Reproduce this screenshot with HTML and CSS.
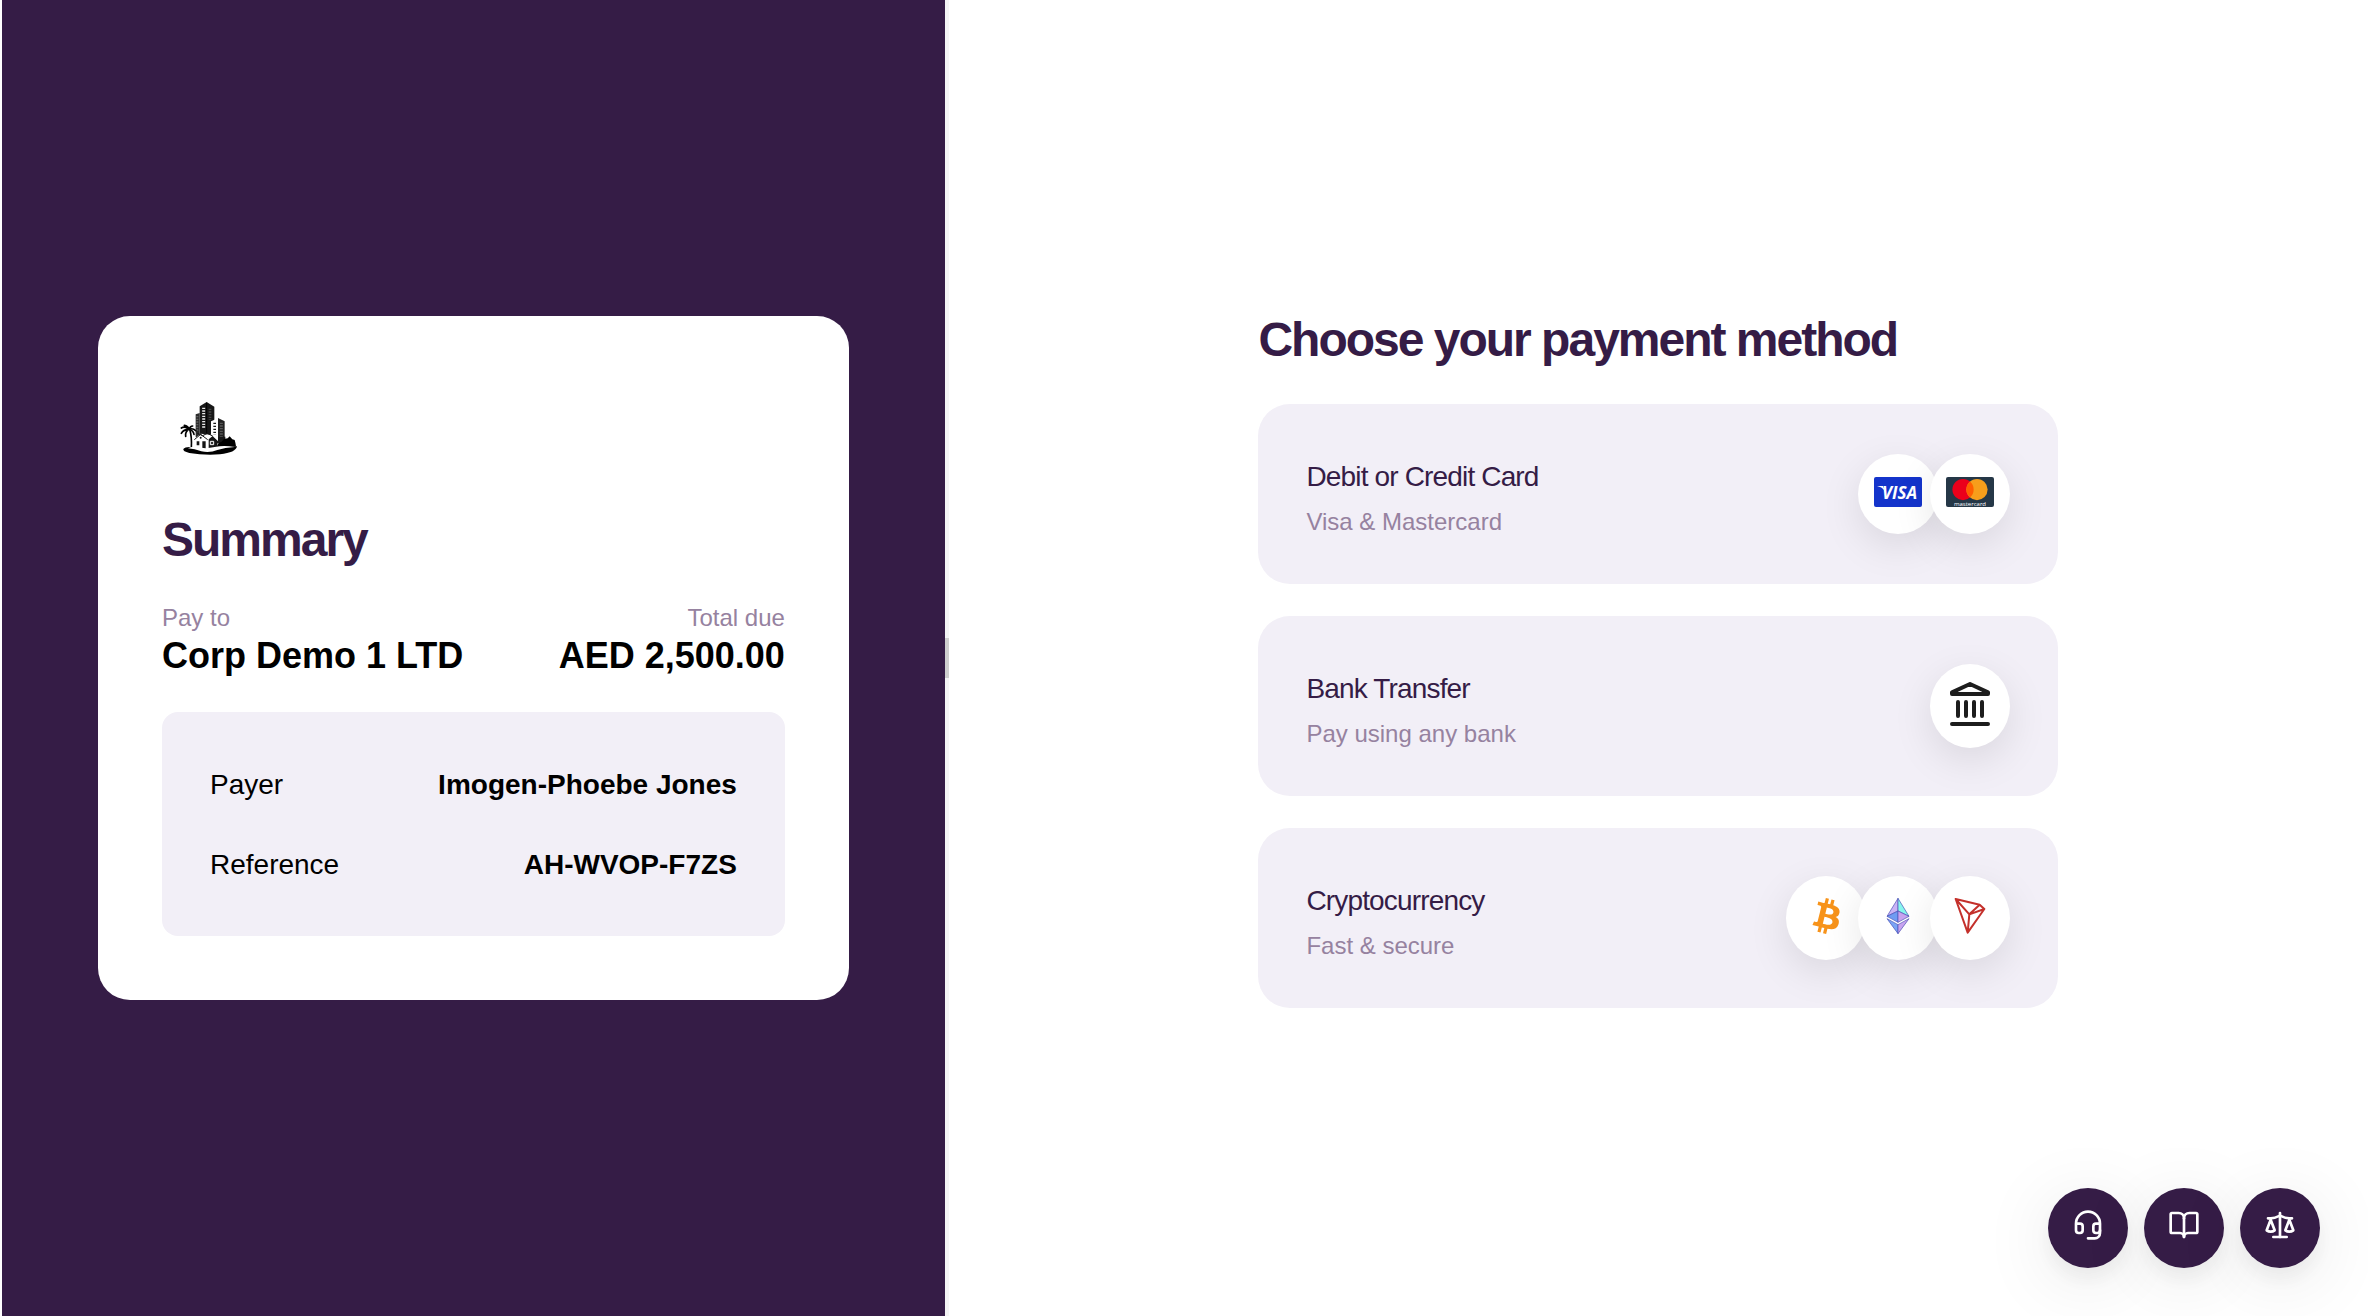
FILE: index.html
```html
<!DOCTYPE html>
<html lang="en">
<head>
<meta charset="utf-8">
<meta name="viewport" content="width=device-width, initial-scale=1">
<title>Checkout</title>
<link rel="stylesheet" href="styles.css">
</head>
<body>
<div class="checkout">
  <aside class="summary-pane">
    <section class="summary" aria-labelledby="summary-title">
      <svg class="merchant-logo" viewBox="6 0 288 288" role="img" aria-label="Corp Demo 1 LTD logo">
        <!-- towers -->
        <g fill="#171717">
          <path d="M107 103L119 99V168L107 172Z" fill="#2b2b2b"/>
          <path d="M119 79L140 66L163 80V126L156 128V164L119 170Z"/>
          <path d="M174 114L194 124V182L174 190Z" fill="#222"/>
          <path d="M150 170L196 170L196 190H150Z"/>
        </g>
        <path d="M140 68V165" stroke="#000" stroke-width="3"/>
        <path d="M153 124L174 115V184L153 166Z" fill="#fff"/>
        <g fill="none" stroke="#fff" stroke-dasharray="4 4">
          <path d="M131 83V146" stroke-width="9" opacity=".9"/>
          <path d="M112 108V155" stroke-width="6" opacity=".25"/>
          <path d="M150 86V120" stroke-width="8" opacity=".2"/>
          <path d="M184 128V170" stroke-width="9" opacity=".25"/>
        </g>
        <path d="M164 128V165" stroke="#1b1b1b" stroke-width="8" stroke-dasharray="4 5" fill="none"/>
        <!-- palm -->
        <g fill="none" stroke="#000" stroke-linecap="round">
          <path d="M89 148Q96 170 94 204" stroke-width="5"/>
          <path d="M88 148Q74 137 64 144M88 148Q70 148 64 160M88 148Q75 154 77 169M88 148Q90 138 98 138M88 148Q84 138 73 136M88 148Q98 143 107 152M88 148Q100 152 102 163" stroke-width="5"/>
        </g>
        <!-- house -->
        <path d="M104 176L122 161L160 165L168 172L148 180V210H104Z" fill="#fff"/>
        <path d="M103 179L122 163L143 179M112 160L128 167L142 160L158 168" fill="none" stroke="#151515" stroke-width="3"/>
        <g fill="#151515">
          <path d="M110 184H118V196H110ZM127 184H137V208H127ZM146 178L158 168L172 182V204H146Z"/>
          <circle cx="122" cy="173" r="3"/>
        </g>
        <path d="M151 184H161V194H151Z" fill="#333" stroke="#fff" stroke-width="3"/>
        <!-- island -->
        <path d="M170 204Q172 188 184 186L192 177L203 175L209 169L217 178L224 180Q227 190 228 199L200 204Z" fill="#000"/>
        <path d="M70 207Q76 198 104 202Q130 211 160 207Q190 197 231 199Q228 218 180 223Q130 226 88 219Q68 214 70 207Z" fill="#000"/>
        <path d="M84 205Q104 206 124 214Q150 219 172 210Q195 202 224 201Q192 195 164 201Q136 208 112 201Q92 198 84 205Z" fill="#fff"/>
      </svg>
      <h1 class="heading" id="summary-title">Summary</h1>
      <dl class="totals">
        <div class="total">
          <dt>Pay to</dt>
          <dd>Corp Demo 1 LTD</dd>
        </div>
        <div class="total total-end">
          <dt>Total due</dt>
          <dd>AED 2,500.00</dd>
        </div>
      </dl>
      <dl class="details">
        <div class="detail">
          <dt>Payer</dt>
          <dd>Imogen-Phoebe Jones</dd>
        </div>
        <div class="detail">
          <dt>Reference</dt>
          <dd>AH-WVOP-F7ZS</dd>
        </div>
      </dl>
    </section>
  </aside>

  <div class="splitter" role="separator" aria-orientation="vertical"><span class="splitter-grip"></span></div>

  <main class="methods-pane">
    <div class="methods">
      <h2 class="heading">Choose your payment method</h2>

      <button type="button" class="method">
        <span class="method-text">
          <span class="method-name">Debit or Credit Card</span>
          <span class="method-note">Visa &amp; Mastercard</span>
        </span>
        <span class="badges badges-cards">
          <span class="badge">
            <svg class="card-icon" viewBox="0 0 48 30" role="img" aria-label="Visa">
              <rect width="48" height="30" rx="2" fill="#1434cb"/>
              <path d="M3 9H9L12 17L10 13Q8 10 3 9Z" fill="#fff"/>
              <text x="8" y="22" class="visa-word">VISA</text>
            </svg>
          </span>
          <span class="badge">
            <svg class="card-icon" viewBox="0 0 48 30" role="img" aria-label="Mastercard">
              <rect width="48" height="30" rx="2" fill="#253747"/>
              <circle cx="17" cy="12.600" r="10.600" fill="#eb001b"/>
              <circle cx="31" cy="12.600" r="10.600" fill="#f79e1b"/>
              <path d="M24 4.600a10.600 10.600 0 0 1 0 16a10.600 10.600 0 0 1 0-16Z" fill="#ff5f00"/>
              <text x="24" y="29" text-anchor="middle" class="mc-word">mastercard</text>
            </svg>
          </span>
        </span>
      </button>

      <button type="button" class="method">
        <span class="method-text">
          <span class="method-name">Bank Transfer</span>
          <span class="method-note">Pay using any bank</span>
        </span>
        <span class="badges">
          <span class="badge">
            <svg class="bank-icon" viewBox="150 126 120 132" fill="none" stroke="#1d1d1d" stroke-width="12" stroke-linecap="round" stroke-linejoin="round" aria-hidden="true">
              <path d="M156 157L210 132L264 157V162H156Z"/>
              <path d="M174 186V228M198 186V228M222 186V228M246 186V228M156 252H264"/>
            </svg>
          </span>
        </span>
      </button>

      <button type="button" class="method">
        <span class="method-text">
          <span class="method-name">Cryptocurrency</span>
          <span class="method-note">Fast &amp; secure</span>
        </span>
        <span class="badges">
          <span class="badge">
            <svg class="coin-icon" viewBox="5.680 6 20 20" role="img" aria-label="Bitcoin">
              <path fill="#f7931a" d="M23.189 14.020c.314-2.096-1.283-3.223-3.465-3.975l.708-2.840-1.728-.430-.690 2.765c-.454-.114-.920-.220-1.385-.326l.695-2.783L15.596 6l-.708 2.839c-.376-.086-.746-.170-1.104-.260l.002-.009-2.384-.595-.460 1.846s1.283.294 1.256.312c.700.175.826.638.805 1.006l-.806 3.235c.048.012.110.030.180.057l-.183-.045-1.130 4.532c-.086.212-.303.531-.793.410.018.025-1.256-.313-1.256-.313l-.858 1.978 2.250.561c.418.105.828.215 1.231.318l-.715 2.872 1.727.430.708-2.840c.472.127.930.245 1.378.357l-.706 2.828 1.728.430.715-2.866c2.948.558 5.164.333 6.097-2.333.752-2.146-.037-3.385-1.588-4.192 1.130-.260 1.980-1.003 2.207-2.538zm-3.950 5.538c-.533 2.147-4.148.986-5.320.695l.950-3.805c1.172.293 4.929.872 4.370 3.110zm.535-5.569c-.487 1.953-3.495.960-4.470.717l.860-3.450c.975.243 4.118.696 3.610 2.733z"/>
            </svg>
          </span>
          <span class="badge">
            <svg class="coin-icon" viewBox="330 114 108 108" role="img" aria-label="Ethereum">
              <g stroke="#4a4fb5" stroke-width="2" stroke-linejoin="round">
                <path d="M384 115V153L351 169Z" fill="#c9b3f5"/>
                <path d="M384 115V153L417 169Z" fill="#88f7ee"/>
                <path d="M384 153V187L351 169Z" fill="#6f9cf2"/>
                <path d="M384 153V187L417 169Z" fill="#c9a4f0"/>
                <path d="M351 176L384 194V221Z" fill="#7aa5f5"/>
                <path d="M417 176L384 194V221Z" fill="#c9a4f0"/>
              </g>
            </svg>
          </span>
          <span class="badge">
            <svg class="coin-icon" viewBox="546 114 108 108" role="img" aria-label="TRON" fill="none" stroke="#c4302b" stroke-width="6" stroke-linejoin="round">
              <path d="M557 117L629 134L643 147L593 218ZL598 163L593 218M598 163L629 134M598 163L643 147"/>
            </svg>
          </span>
        </span>
      </button>
    </div>
  </main>
</div>

<nav class="help-bar" aria-label="Help">
  <button type="button" class="help-button" aria-label="Support">
    <svg class="help-icon" viewBox="0 0 24 24" aria-hidden="true"><path d="M3 11h3a2 2 0 0 1 2 2v3a2 2 0 0 1-2 2H5a2 2 0 0 1-2-2v-5Zm0 0a9 9 0 1 1 18 0m0 0v5a2 2 0 0 1-2 2h-1a2 2 0 0 1-2-2v-3a2 2 0 0 1 2-2h3Z"/><path d="M21 16v2a4 4 0 0 1-4 4h-5"/></svg>
  </button>
  <button type="button" class="help-button" aria-label="Guide">
    <svg class="help-icon" viewBox="0 0 24 24" aria-hidden="true"><path d="M12 7v14"/><path d="M3 18a1 1 0 0 1-1-1V4a1 1 0 0 1 1-1h5a4 4 0 0 1 4 4 4 4 0 0 1 4-4h5a1 1 0 0 1 1 1v13a1 1 0 0 1-1 1h-6a3 3 0 0 0-3 3 3 3 0 0 0-3-3z"/></svg>
  </button>
  <button type="button" class="help-button" aria-label="Legal">
    <svg class="help-icon" viewBox="0 0 24 24" aria-hidden="true"><path d="m16 16 3-8 3 8c-.870.650-1.920 1-3 1s-2.130-.350-3-1Z"/><path d="m2 16 3-8 3 8c-.870.650-1.920 1-3 1s-2.130-.350-3-1Z"/><path d="M7 21h10"/><path d="M12 3v18"/><path d="M3 7h2c2 0 5-1 7-2 2 1 5 2 7 2h2"/></svg>
  </button>
</nav>
</body>
</html>
```
FILE: styles.css
```css
:root {
  --brand: #351c46;
  --muted: #9682a0;
  --surface: #f2eff7;
}

* {
  box-sizing: border-box;
}

body,
h1,
h2,
dl,
dd {
  margin: 0;
}

body {
  background: #fff;
  color: #000;
  font-family: "Liberation Sans", Helvetica, Arial, sans-serif;
  font-size: 28px;
}

button {
  border: 0;
  font: inherit;
  cursor: pointer;
}

svg {
  display: block;
}

.checkout {
  display: grid;
  grid-template-columns: 39.9% 4px 1fr;
  min-height: 100vh;
}

.heading {
  color: var(--brand);
  font-size: 48px;
  font-weight: 700;
  line-height: 64px;
  letter-spacing: -2px;
}

/* Left: order summary */
.summary-pane {
  display: flex;
  flex-direction: column;
  justify-content: center;
  padding: 96px;
  background: var(--brand);
  border-left: 2px solid #fff;
}

.summary {
  padding: 64px;
  background: #fff;
  border-radius: 32px;
}

.merchant-logo {
  width: 96px;
  height: 96px;
  margin-bottom: 32px;
}

.totals {
  display: flex;
  justify-content: space-between;
  gap: 32px;
  padding: 28px 0 36px;
}

.total dt {
  color: var(--muted);
  font-size: 24px;
  line-height: 36px;
}

.total dd {
  font-size: 36px;
  font-weight: 700;
  line-height: 40px;
}

.total-end {
  text-align: right;
}

.details {
  display: grid;
  gap: 30px;
  padding: 48px 48px 46px;
  background: var(--surface);
  border-radius: 16px;
}

.detail {
  display: flex;
  justify-content: space-between;
  gap: 32px;
  line-height: 50px;
}

.detail dd {
  font-weight: 700;
}

/* Divider between the panes */
.splitter {
  display: flex;
  align-items: center;
  background: #f4f4f5;
}

.splitter-grip {
  width: 100%;
  height: 40px;
  background: #cfcfcf;
}

/* Right: payment methods */
.methods-pane {
  display: flex;
  align-items: center;
  justify-content: center;
  padding: 48px;
}

.methods {
  display: grid;
  gap: 32px;
  width: 100%;
  max-width: 800px;
}

.method {
  display: flex;
  align-items: center;
  justify-content: space-between;
  padding: 48px;
  background: var(--surface);
  border-radius: 32px;
  text-align: left;
}

.method-text {
  display: grid;
  gap: 6px;
}

.method-name {
  color: var(--brand);
  line-height: 50px;
  letter-spacing: -0.03em;
}

.method-note {
  color: var(--muted);
  font-size: 24px;
  line-height: 28px;
}

.badges {
  display: flex;
}

.badge {
  display: flex;
  align-items: center;
  justify-content: center;
  width: 80px;
  height: 84px;
  padding-bottom: 4px;
  background: #fff;
  border-radius: 50%;
  box-shadow: 0 12px 40px rgba(0, 0, 0, 0.1);
}

.badge + .badge {
  margin-left: -8px;
}

.badges-cards .badge {
  height: 80px;
}

.card-icon {
  width: 48px;
  height: 30px;
}

.bank-icon {
  width: 40px;
  height: 44px;
}

.coin-icon {
  width: 36px;
  height: 36px;
}

.visa-word {
  fill: #fff;
  font: italic 700 17px "Open Sans", sans-serif;
}

.mc-word {
  fill: #fff;
  font: 6px "Open Sans", sans-serif;
}

/* Floating help buttons */
.help-bar {
  position: fixed;
  right: 48px;
  bottom: 48px;
  display: flex;
  gap: 16px;
}

.help-button {
  display: flex;
  align-items: center;
  justify-content: center;
  width: 80px;
  height: 80px;
  padding: 0 0 6px;
  background: var(--brand);
  border-radius: 50%;
  box-shadow: 0 12px 20px rgba(0, 0, 0, 0.05), 0 12px 72px rgba(0, 0, 0, 0.1);
}

.help-icon {
  width: 32px;
  height: 32px;
  fill: none;
  stroke: #fff;
  stroke-width: 2;
  stroke-linecap: round;
  stroke-linejoin: round;
}
```
